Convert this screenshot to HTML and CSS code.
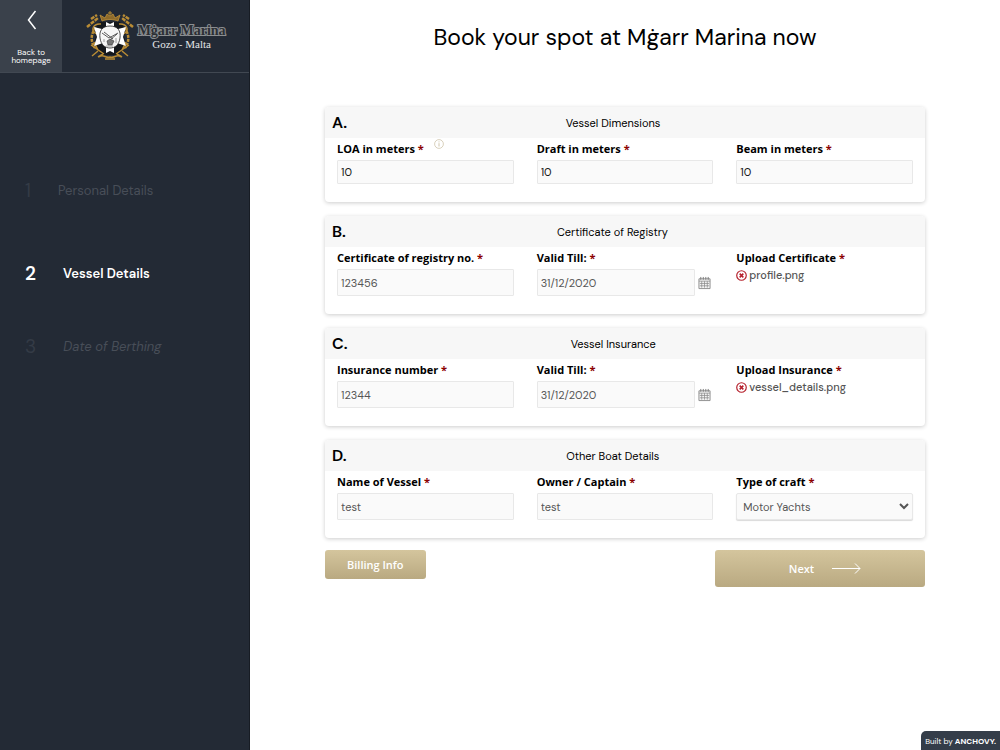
FILE: index.html
```html
<!DOCTYPE html>
<html lang="en">
<head>
  <meta charset="UTF-8" />
  <meta name="viewport" content="width=device-width, initial-scale=1" />
  <title>Mġarr Marina - Vessel Details</title>
  <link rel="stylesheet" href="styles.css">
</head>
<body>

  <!-- Shared icons -->
  <svg class="sprite" aria-hidden="true">
    <symbol id="calendar" viewBox="0 0 14 14">
      <path d="M1 2.500h12v10.500H1z" fill="#f4f4f4" stroke="#8a8a8a"/>
      <path d="M1 5h12M2 7.500h10M2 10h10M4 5v7M7 5v7M10 5v7" fill="none" stroke="#8a8a8a" stroke-width=".8"/>
      <path d="M3 .5v3M5.700 .5v3M8.400 .5v3M11 .5v3" stroke="#777"/>
    </symbol>
    <symbol id="remove" viewBox="0 0 12 12">
      <circle cx="6" cy="6" r="5.200" fill="#fff" stroke="#b5202c" stroke-width="1.300"/>
      <path d="M4 4l4 4M8 4L4 8" stroke="#b5202c" stroke-width="1.700"/>
    </symbol>
  </svg>

  <div class="page">
    <aside class="sidebar">
      <header class="top">
        <a href="#" class="back">
          <svg width="12" height="20" viewBox="0 0 12 20"><path d="M10.500 1L3.500 10l7 9" fill="none" stroke="#fff" stroke-width="1.500"/></svg>
          <span>Back to homepage</span>
        </a>
        <a href="#" class="logo">
          <svg class="crest" width="48" height="50" viewBox="0 0 48 50" aria-hidden="true">
            <path d="M14 11h20l7 9-3 5 3 10-9 9H16l-9-9 3-10-3-5z" fill="#15181c"/>
            <g fill="none" stroke="#b98c35" stroke-width="1.500">
              <path d="M15 13C7 12 5 19 9 22c3 2 5-1 3-3M33 13c8-1 10 6 6 9-3 2-5-1-3-3"/>
              <path d="M10 17c-5 5-6 13-1 20M38 17c5 5 6 13 1 20" stroke-width="2.500" stroke-dasharray="3 1"/>
              <path d="M5 34l13 9M43 34l-13 9M8 31l4 8M40 31l-4 8M12 40l-6 5M36 40l6 5"/>
              <path d="M1 16l11-9M47 16L36 7M5 8l6-4M43 8l-6-4" stroke-width="2.500" stroke-dasharray="4 1"/>
              <path d="M13 46c4-4 7 2 11 0 4 2 7-4 11 0M19 48h10M17 43l-5 3M31 43l5 3"/>
            </g>
            <path d="M16 10l-2-6 5 3 2-4 3 2 3-2 2 4 5-3-2 6c-5-2-11-2-16 0z" fill="#8e6b2b" stroke="#c0923a" stroke-width=".8"/>
            <path d="M24 0v4M22 2h4" stroke="#b98c35"/>
            <!-- Maltese cross behind the shield -->
            <path d="M20 11l4 2 4-2v8l12-3-3 10 3 9-12-4v11l-4-2-4 2V31L8 35l3-9-3-10 12 3z" fill="#fff"/>
            <path d="M24 15c8 0 11 5 10 12-1 7-5 10-10 10s-9-3-10-10c-1-7 2-12 10-12z" fill="#f5f5f5" stroke="#222" stroke-width=".8"/>
            <path d="M16 22l7 5 9-5M18 21l9 7M31 23l-7 6" fill="none" stroke="#333" stroke-width=".8"/>
            <path d="M21 30l3-2 4 2-2 4h-4z" fill="#777" stroke="#333" stroke-width=".6"/>
            <path d="M18 28v3M30 27v5M20 35h7" stroke="#888" stroke-width=".8"/>
          </svg>
          <span class="brand">
            <span class="brand-name">Mġarr Marina</span>
            <span class="brand-place">Gozo - Malta</span>
          </span>
        </a>
      </header>

      <ol class="steps">
        <li class="step"><span class="num">1</span>Personal Details</li>
        <li class="step current"><span class="num">2</span>Vessel Details</li>
        <li class="step next-step"><span class="num">3</span><em>Date of Berthing</em></li>
      </ol>
    </aside>

    <main class="content">
      <h1>Book your spot at Mġarr Marina now</h1>

      <form class="booking">
        <section class="card">
          <div class="card-head"><b>A.</b><h2>Vessel Dimensions</h2></div>
          <div class="fields short">
            <div class="field">
              <div class="label-row">
                <label for="loa">LOA in meters <i>*</i></label>
                <svg class="info" width="10" height="10" viewBox="0 0 10 10"><circle cx="5" cy="5" r="4.400" fill="none" stroke="#cfc5ac" stroke-width=".8"/><path d="M5 2.400v1M5 4.200v3.300" stroke="#cfc5ac"/></svg>
              </div>
              <input type="text" id="loa" value="10">
            </div>
            <div class="field">
              <label for="draft">Draft in meters <i>*</i></label>
              <input type="text" id="draft" value="10">
            </div>
            <div class="field">
              <label for="beam">Beam in meters <i>*</i></label>
              <input type="text" id="beam" value="10">
            </div>
          </div>
        </section>

        <section class="card">
          <div class="card-head"><b>B.</b><h2>Certificate of Registry</h2></div>
          <div class="fields">
            <div class="field">
              <label for="registry">Certificate of registry no. <i>*</i></label>
              <input type="text" id="registry" value="123456">
            </div>
            <div class="field">
              <label for="cert-date">Valid Till: <i>*</i></label>
              <div class="date">
                <input type="text" id="cert-date" value="31/12/2020">
                <button type="button" class="icon-btn" aria-label="Choose date"><svg width="13" height="14"><use href="#calendar"/></svg></button>
              </div>
            </div>
            <div class="field">
              <span class="label">Upload Certificate <i>*</i></span>
              <div class="file">
                <button type="button" class="icon-btn" aria-label="Remove file"><svg width="11" height="11"><use href="#remove"/></svg></button>
                <span>profile.png</span>
              </div>
            </div>
          </div>
        </section>

        <section class="card">
          <div class="card-head"><b>C.</b><h2>Vessel Insurance</h2></div>
          <div class="fields">
            <div class="field">
              <label for="insurance">Insurance number <i>*</i></label>
              <input type="text" id="insurance" value="12344">
            </div>
            <div class="field">
              <label for="ins-date">Valid Till: <i>*</i></label>
              <div class="date">
                <input type="text" id="ins-date" value="31/12/2020">
                <button type="button" class="icon-btn" aria-label="Choose date"><svg width="13" height="14"><use href="#calendar"/></svg></button>
              </div>
            </div>
            <div class="field">
              <span class="label">Upload Insurance <i>*</i></span>
              <div class="file">
                <button type="button" class="icon-btn" aria-label="Remove file"><svg width="11" height="11"><use href="#remove"/></svg></button>
                <span>vessel_details.png</span>
              </div>
            </div>
          </div>
        </section>

        <section class="card">
          <div class="card-head"><b>D.</b><h2>Other Boat Details</h2></div>
          <div class="fields">
            <div class="field">
              <label for="vessel">Name of Vessel <i>*</i></label>
              <input type="text" id="vessel" value="test">
            </div>
            <div class="field">
              <label for="owner">Owner / Captain <i>*</i></label>
              <input type="text" id="owner" value="test">
            </div>
            <div class="field">
              <label for="craft">Type of craft <i>*</i></label>
              <select id="craft">
                <option>Motor Yachts</option>
              </select>
            </div>
          </div>
        </section>

        <div class="actions">
          <button type="button" class="btn">Billing Info</button>
          <button type="submit" class="btn btn-next">Next
            <svg width="30" height="12" viewBox="0 0 30 12"><path d="M0 5.500h28M23 .5l5 5-5 5" fill="none" stroke="#fff"/></svg>
          </button>
        </div>
      </form>
    </main>
  </div>

  <a href="#" class="built">Built by <b>ANCHOVY.</b></a>

</body>
</html>
```
FILE: styles.css
```css
* {
  box-sizing: border-box;
}

body {
  margin: 0;
  background: #fff;
  font-family: "DM Sans", Inter, sans-serif;
  color: #000;
}

.sprite {
  display: none;
}

.page {
  display: grid;
  grid-template-columns: 1fr 3fr;
  min-height: 100vh;
}

/* Sidebar */
.sidebar {
  background: #232a35;
  border-right: 1px solid #171c24;
}

.top {
  display: flex;
  height: 73px;
  border-bottom: 1px solid #414852;
}

.back {
  display: flex;
  flex-direction: column;
  align-items: center;
  justify-content: space-between;
  width: 25%;
  padding: 10px 8px 8px;
  background: #3a414b;
  color: #fff;
  font-size: 8px;
  line-height: 8px;
  text-align: center;
  text-decoration: none;
}

.logo {
  display: flex;
  flex: 1;
  align-items: center;
  justify-content: center;
  gap: 4px;
  text-decoration: none;
}

.brand {
  display: flex;
  flex-direction: column;
  align-items: center;
  font-family: "Liberation Serif", serif;
}

.brand-name {
  font-size: 14px;
  line-height: 15px;
  font-weight: bold;
  color: #2b2f34;
  -webkit-text-stroke: 2px #8b8e91;
  paint-order: stroke fill;
}

.brand-place {
  font-size: 11px;
  line-height: 12px;
  color: #e4e6e8;
}

.steps {
  display: flex;
  flex-direction: column;
  gap: 55px;
  margin: 0;
  padding: 106px 25px;
  list-style: none;
}

.step {
  display: flex;
  align-items: center;
  gap: 27px;
  font-size: 13px;
  line-height: 24px;
  color: #484e58;
}

.num {
  font-size: 19px;
  color: #343b46;
}

.current {
  margin-top: 4px;
  font-weight: 600;
}

.current,
.current .num {
  color: #fff;
}

.next-step {
  margin-top: -6px;
}

/* Main area */
.content {
  padding: 22px 10% 0;
}

h1 {
  margin: 0 0 54px;
  font-size: 23px;
  line-height: 31px;
  font-weight: 400;
  text-align: center;
}

.booking {
  display: flex;
  flex-direction: column;
  gap: 14px;
}

.card {
  background: #fff;
  border-radius: 4px;
  box-shadow: 0 1px 4px rgba(0, 0, 0, 0.2);
  overflow: hidden;
}

.card-head {
  display: flex;
  align-items: center;
  height: 31px;
  padding: 0 46px 0 7px;
  background: #f7f7f7;
}

.card-head b {
  font-size: 16px;
  font-weight: 600;
}

h2 {
  flex: 1;
  margin: 0;
  font-size: 11px;
  font-weight: 400;
  text-align: center;
}

.fields {
  display: grid;
  grid-template-columns: repeat(3, 1fr);
  gap: 23px;
  padding: 4px 12px 18px;
}

.field {
  display: flex;
  flex-direction: column;
  gap: 4px;
  min-width: 0;
}

.label-row {
  display: flex;
  gap: 10px;
}

.info {
  margin-top: -3px;
}

label,
.label {
  font: bold 11px/14px "Open Sans", sans-serif;
}

label i,
.label i {
  font-style: normal;
  color: #8b0000;
}

input,
select {
  width: 100%;
  min-width: 0;
  height: 27px;
  padding: 0 3px;
  border: 1px solid #e8e8e8;
  border-radius: 1px;
  background: #fafafa;
  font-family: inherit;
  font-size: 11px;
  color: #555;
}

select {
  padding: 0 2px;
  border-radius: 2px;
  box-shadow: 0 1px 1px rgba(0, 0, 0, 0.15);
}

.short input {
  height: 24px;
  color: #111;
}

.date {
  display: flex;
  align-items: center;
  gap: 3px;
  padding-right: 2px;
}

.icon-btn {
  display: flex;
  flex-shrink: 0;
  padding: 0;
  border: 0;
  background: none;
  cursor: pointer;
}

.file {
  display: flex;
  align-items: center;
  gap: 2px;
  font-size: 11px;
  line-height: 12px;
  font-weight: 500;
  color: #555;
}

.actions {
  display: flex;
  align-items: flex-start;
  justify-content: space-between;
  margin-top: -2px;
}

.btn {
  height: 29px;
  padding: 0 22px;
  border: 0;
  border-radius: 3px;
  background: linear-gradient(#d4c59d, #b9a981);
  color: #fff;
  font: 600 11px "Open Sans", sans-serif;
  cursor: pointer;
}

.btn-next {
  display: flex;
  align-items: center;
  justify-content: center;
  gap: 18px;
  width: 35%;
  height: 37px;
  padding: 0 11px 0 22px;
}

.built {
  position: fixed;
  right: 0;
  bottom: 0;
  padding: 4px 4px 3px;
  border-radius: 5px 0 0 0;
  background: #343d49;
  color: #fff;
  font-size: 8px;
  line-height: 12px;
  text-decoration: none;
}
```
